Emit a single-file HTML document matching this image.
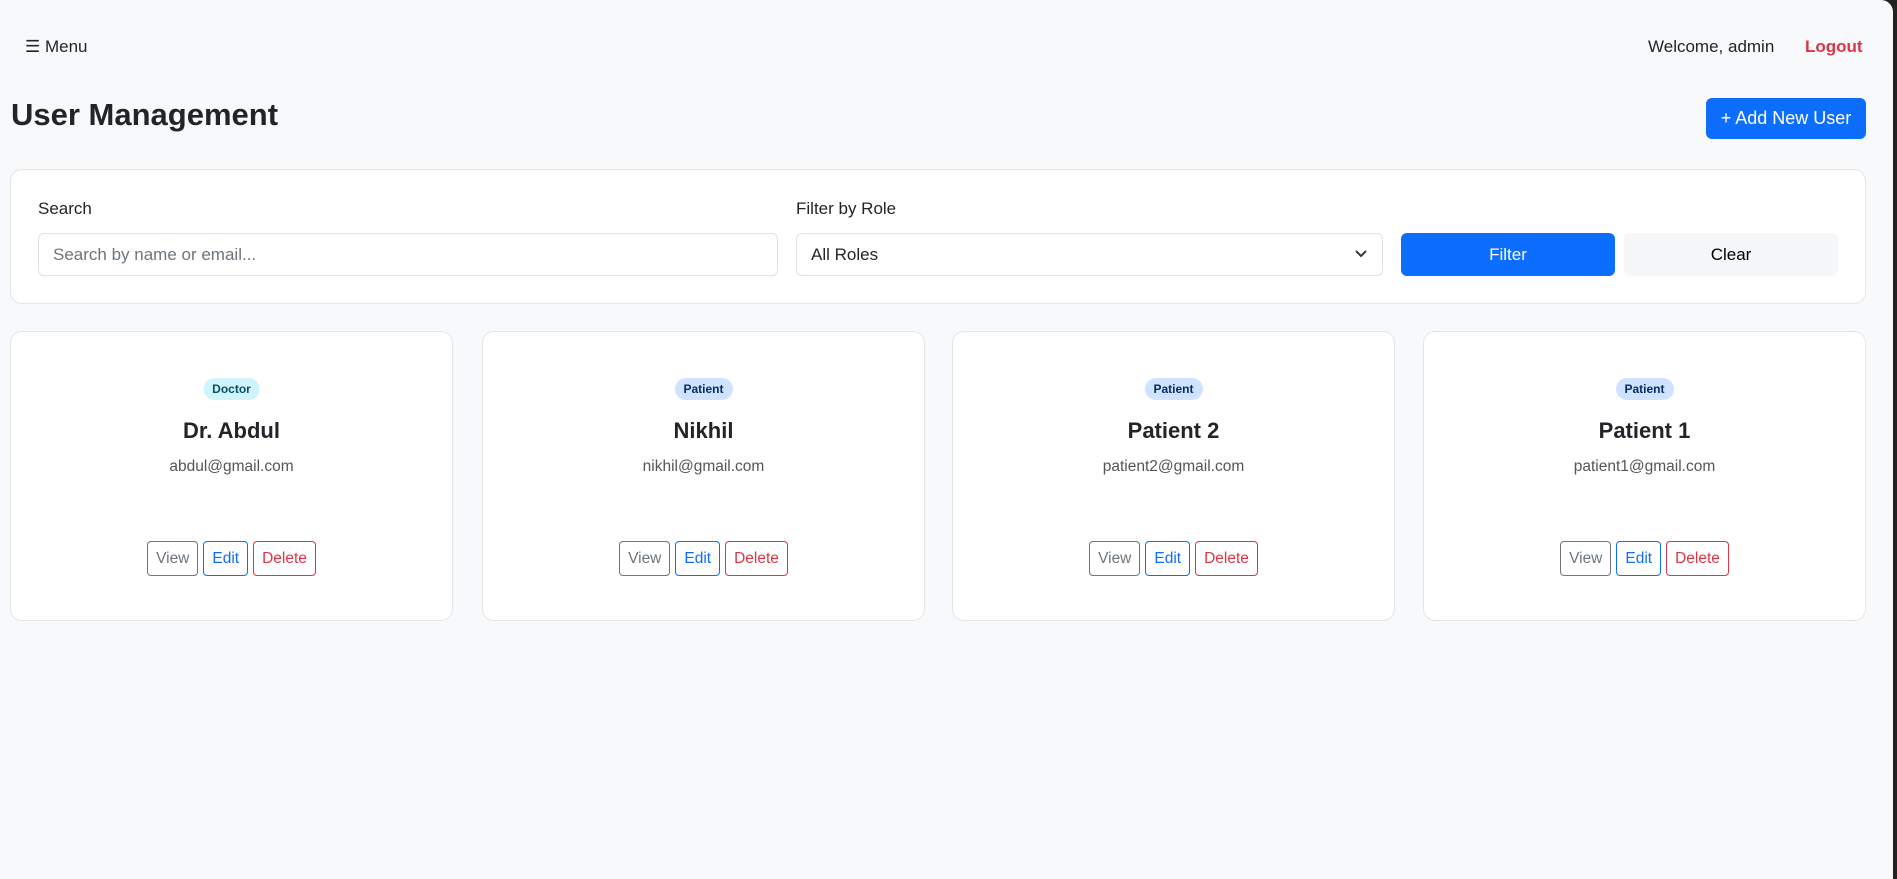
<!DOCTYPE html>
<html><head><meta charset="utf-8"><style>
*{box-sizing:border-box;margin:0;padding:0}
html,body{width:1897px;height:879px;overflow:hidden;background:#222;font-family:"Liberation Sans",Arial,sans-serif;color:#212529}
.page{position:absolute;left:0;top:0;width:1893px;height:879px;background:#f8f9fb;border-top-right-radius:12px}
.abs{position:absolute}
.menu{left:25px;top:37px;font-size:17px}
.welcome{left:1648px;top:37px;font-size:17px}
.logout{left:1805px;top:37px;font-size:17px;font-weight:bold;color:#dc3545}
h1{position:absolute;left:11px;top:97px;font-size:31px;font-weight:bold}
.add{left:1706px;top:98px;width:160px;height:41px;background:#0d6efd;color:#fff;border-radius:6px;font-size:18px;display:flex;align-items:center;justify-content:center}
.fcard{left:10px;top:169px;width:1856px;height:135px;background:#fff;border:1px solid #e3e6ea;border-radius:12px}
.lbl{font-size:17px;top:199px}
.inp{top:233px;height:43px;border:1px solid #dee2e6;border-radius:6px;background:#fff;font-size:17px;display:flex;align-items:center;padding-left:14px}
.btn{top:233px;height:43px;border-radius:6px;font-size:17px;display:flex;align-items:center;justify-content:center}
.card{top:331px;width:443px;height:290px;background:#fff;border:1px solid #e3e6ea;border-radius:12px;text-align:center}
.badge{position:absolute;top:46px;left:50%;transform:translateX(-50%);height:22px;line-height:22px;padding:0 9px;border-radius:11px;font-size:12px;font-weight:bold}
.doc{background:#cff4fc;color:#055160}
.pat{background:#cfe2ff;color:#052c65}
.name{position:absolute;top:86px;width:100%;font-size:22px;font-weight:bold}
.email{position:absolute;top:126px;width:100%;font-size:15.5px;color:#555}
.acts{position:absolute;top:209px;width:100%;display:flex;justify-content:center;gap:5px}
.acts span{height:35px;line-height:33px;padding:0 8px;border:1px solid;border-radius:4px;font-size:15.5px;background:#fff}
.v{color:#6c757d;border-color:#6c757d}.e{color:#0d6efd;border-color:#0d6efd}.d{color:#dc3545;border-color:#dc3545}
</style></head><body><div class="page">
<div class="abs menu">☰ Menu</div>
<div class="abs welcome">Welcome, admin</div>
<div class="abs logout">Logout</div>
<h1>User Management</h1>
<div class="abs add">+ Add New User</div>
<div class="abs fcard"></div>
<div class="abs lbl" style="left:38px">Search</div>
<div class="abs lbl" style="left:796px">Filter by Role</div>
<div class="abs inp" style="left:38px;width:740px;color:#6c757d">Search by name or email...</div>
<div class="abs inp" style="left:796px;width:587px">All Roles
<svg style="position:absolute;right:14px;top:15px" width="14" height="10" viewBox="0 0 14 10"><path d="M2 2l5 5 5-5" fill="none" stroke="#343a40" stroke-width="2"/></svg></div>
<div class="abs btn" style="left:1401px;width:214px;background:#0d6efd;color:#fff">Filter</div>
<div class="abs btn" style="left:1624px;width:214px;background:#f6f7f9;color:#000">Clear</div>

<div class="abs card" style="left:10px"><span class="badge doc">Doctor</span><div class="name">Dr. Abdul</div><div class="email">abdul@gmail.com</div><div class="acts"><span class="v">View</span><span class="e">Edit</span><span class="d">Delete</span></div></div>
<div class="abs card" style="left:482px"><span class="badge pat">Patient</span><div class="name">Nikhil</div><div class="email">nikhil@gmail.com</div><div class="acts"><span class="v">View</span><span class="e">Edit</span><span class="d">Delete</span></div></div>
<div class="abs card" style="left:952px"><span class="badge pat">Patient</span><div class="name">Patient 2</div><div class="email">patient2@gmail.com</div><div class="acts"><span class="v">View</span><span class="e">Edit</span><span class="d">Delete</span></div></div>
<div class="abs card" style="left:1423px"><span class="badge pat">Patient</span><div class="name">Patient 1</div><div class="email">patient1@gmail.com</div><div class="acts"><span class="v">View</span><span class="e">Edit</span><span class="d">Delete</span></div></div>
</div></body></html>
